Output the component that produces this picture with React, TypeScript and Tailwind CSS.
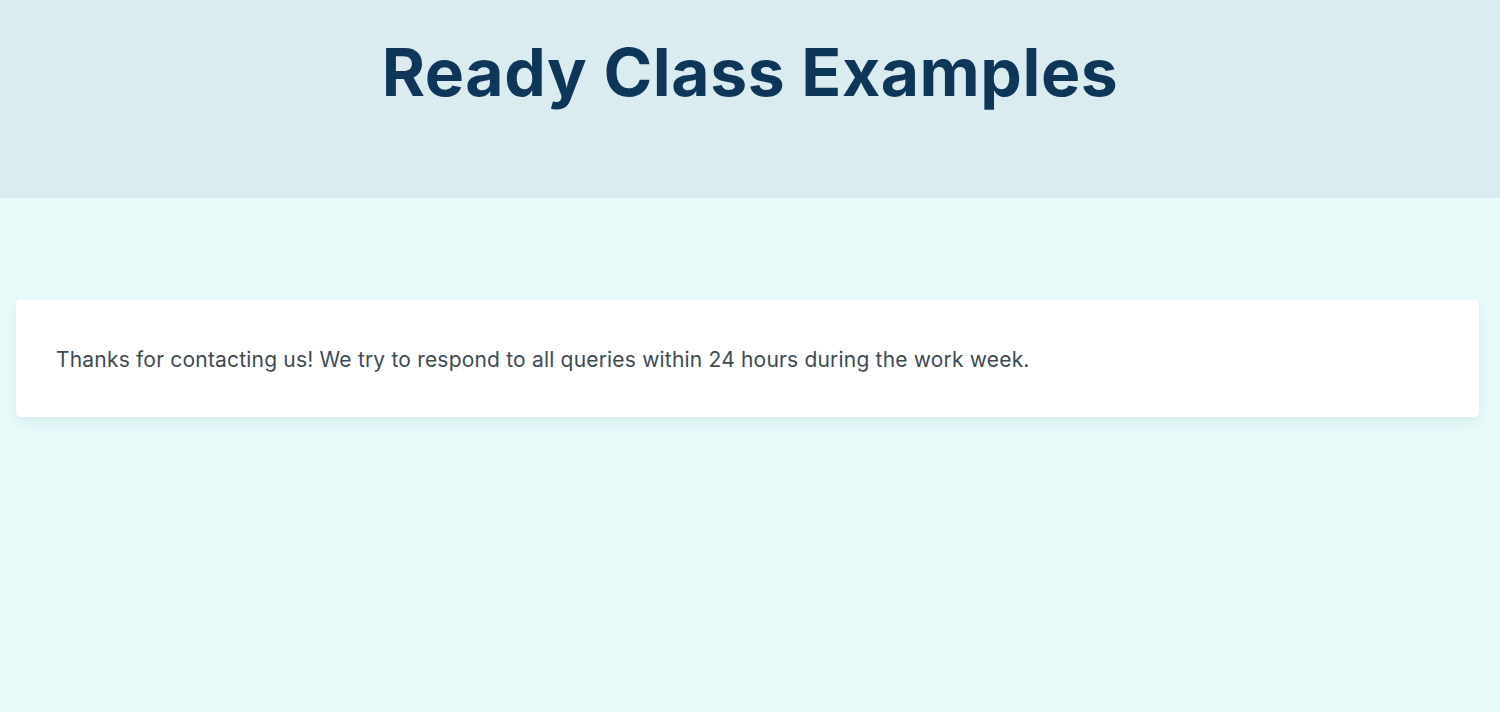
export default function App() {
  return (
    <div className="min-h-screen bg-[#e8fbfb]" style={{ fontFamily: "Inter, 'Noto Sans', sans-serif" }}>
      <header className="h-[198px] bg-[#dbecf1] pt-[30px]">
        <h1 className="text-center text-[66px] leading-[84px] font-bold text-[#0e3659] tracking-[0.55px]">
          Ready Class Examples
        </h1>
      </header>

      <main className="pl-4 pr-[21px] pt-[102px]">
        <div className="bg-white rounded-[5px] shadow-[0_6px_14px_rgba(60,110,120,0.10)] pl-[40px] pr-[41px] pt-[41px] pb-[39px]">
          <p className="text-[21px] leading-[37px] text-[#3d4a52] tracking-[0.19px]">
            Thanks for contacting us! We try to respond to all queries within 24 hours during the work week.
          </p>
        </div>
      </main>
    </div>
  );
}
